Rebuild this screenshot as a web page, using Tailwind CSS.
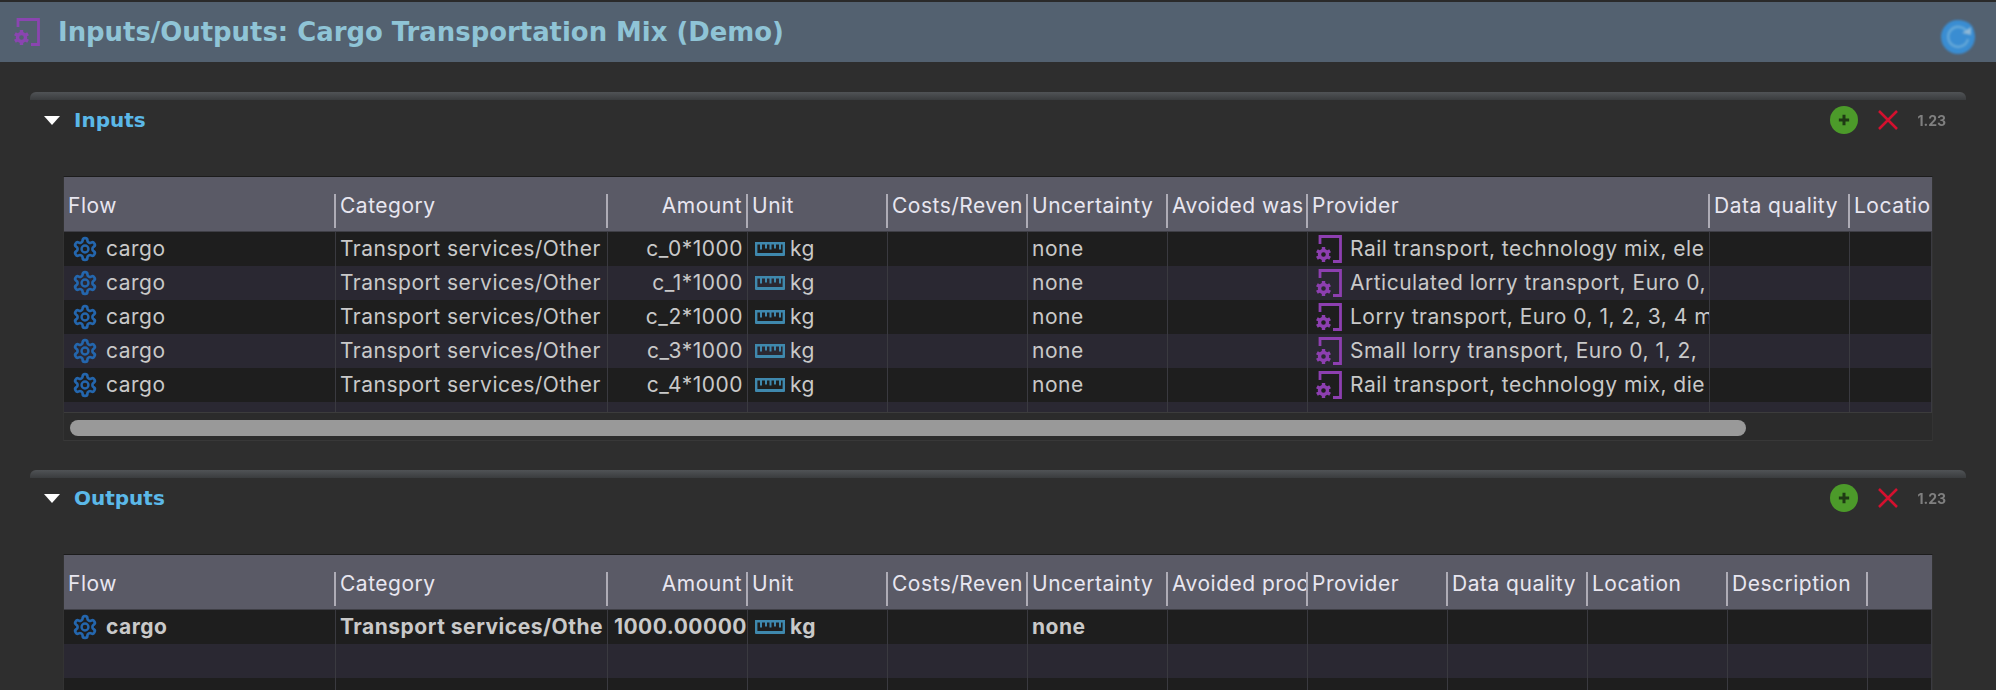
<!DOCTYPE html>
<html lang="en">
<head>
    <meta charset="UTF-8">
    <title>Inputs/Outputs: Cargo Transportation Mix (Demo)</title>
    <script src="https://cdn.jsdelivr.net/npm/@tailwindcss/browser@4"></script>
</head>
<body class="bg-[#2e2e2e] h-[690px] overflow-hidden font-['Inter',sans-serif]">
    <!-- shared icons -->
    <svg class="hidden">
        <symbol id="gear" viewBox="0 0 24 24">
            <path fill="none" stroke="currentColor" stroke-width="2.500" d="M12.22 2h-.44a2 2 0 0 0-2 2v.18a2 2 0 0 1-1 1.73l-.43.25a2 2 0 0 1-2 0l-.15-.08a2 2 0 0 0-2.73.73l-.22.38a2 2 0 0 0 .73 2.73l.15.1a2 2 0 0 1 1 1.72v.51a2 2 0 0 1-1 1.74l-.15.09a2 2 0 0 0-.73 2.73l.22.38a2 2 0 0 0 2.73.73l.15-.08a2 2 0 0 1 2 0l.43.25a2 2 0 0 1 1 1.73V20a2 2 0 0 0 2 2h.44a2 2 0 0 0 2-2v-.18a2 2 0 0 1 1-1.73l.43-.25a2 2 0 0 1 2 0l.15.08a2 2 0 0 0 2.73-.73l.22-.39a2 2 0 0 0-.73-2.73l-.15-.08a2 2 0 0 1-1-1.74v-.5a2 2 0 0 1 1-1.74l.15-.09a2 2 0 0 0 .73-2.73l-.22-.38a2 2 0 0 0-2.73-.73l-.15.08a2 2 0 0 1-2 0l-.43-.25a2 2 0 0 1-1-1.73V4a2 2 0 0 0-2-2z"/>
            <circle cx="12" cy="12" r="3.200" fill="none" stroke="currentColor" stroke-width="2.200"/>
        </symbol>
        <symbol id="process" viewBox="0 0 26 28">
            <path fill="none" stroke="currentColor" stroke-width="2.800" d="M4 9V1.500H24.500V26.500H17"/>
            <circle cx="7.500" cy="19.500" r="4" fill="none" stroke="currentColor" stroke-width="3.400"/>
            <path fill="none" stroke="currentColor" stroke-width="3.400" d="M7.500 12V15M7.500 24V27M.9 15.700L3.600 17.300M11.400 21.700L14.100 23.300M.9 23.300L3.600 21.700M11.400 17.300L14.100 15.700"/>
        </symbol>
        <symbol id="ruler" viewBox="0 0 30 14">
            <path fill="none" stroke="currentColor" stroke-width="2.400" d="M1.200 1.200H28.800V12.500H1.200z"/>
            <path fill="none" stroke="currentColor" stroke-width="2" d="M6 1V7.500M11 1V6.500M15.500 1V7.500M20 1V6.500M25 1V7.500"/>
            <path stroke="currentColor" stroke-width="3" d="M1 12.500H29"/>
        </symbol>
    </svg>

    <div class="h-[62px] box-border bg-[#536170] flex items-center pl-[14px] pr-[18px] border-t-[2px] border-[#2a2a2a]">
        <svg class="w-[26px] h-[28px] text-[#8a45b0]"><use href="#process"/></svg>
        <h1 class="ml-[18px] font-['DejaVu_Sans',sans-serif] font-bold text-[25.900px] text-[#8fc4d6]">Inputs/Outputs: Cargo Transportation Mix (Demo)</h1>
        <svg class="ml-auto mt-[10px] w-[38px] h-[38px] blur-[1px]" viewBox="0 0 38 38">
            <circle cx="18" cy="19" r="17" fill="#3a8dd2"/>
            <circle cx="22" cy="15" r="12" fill="#3a8dd2"/>
            <path fill="none" stroke="#65a8d8" stroke-width="2.500" d="M27 14a10 10 0 1 0 1 7"/>
            <path fill="#8fb8d6" d="M22 15l9-6v8z"/>
        </svg>
    </div>

    <section class="ml-[30px] w-[1936px] mt-[30px]">
        <div class="h-[8px] rounded-t-[6px] bg-gradient-to-b from-[#505356] to-[#3a3c3e]"></div>
        <div class="h-[40px] flex items-center pl-[14px] pr-[20px]">
            <span class="w-0 h-0 border-x-[8px] border-x-transparent border-t-[9px] border-t-white"></span>
            <h2 class="ml-[14px] font-['DejaVu_Sans',sans-serif] font-bold text-[20px] text-[#5bb8e8]">Inputs</h2>
            <span class="ml-auto flex items-center justify-center w-[28px] h-[28px] rounded-full bg-[#4c9a2a]">
                <svg class="w-[12px] h-[12px]" viewBox="0 0 14 14"><path stroke="#1f3a14" stroke-width="3.500" d="M7 1V13M1 7H13"/></svg>
            </span>
            <svg class="ml-[20px] w-[20px] h-[20px]" viewBox="0 0 20 20"><path stroke="#d4112f" stroke-width="2.500" d="M1 1L19 19M19 1L1 19"/></svg>
            <span class="ml-[19px] font-bold text-[14px] text-[#808080] blur-[0.4px]">1.23</span>
        </div>
        <div class="mx-[33px] mt-[36px] border border-[#333] border-t-[#1c1c1c] border-b-[#383838] text-[21px] tracking-[0.5px]">
            <div class="bg-[#5a5a66] h-[54px] pt-[17px] grid grid-cols-[272px_272px_140px_140px_140px_140px_140px_402px_140px_82px] text-[#e8e6f0] whitespace-nowrap [&>div]:h-[34px] [&>div]:overflow-hidden [&>div]:px-[4px] [&>div]:leading-[24px] [&>div:not(:last-child)]:border-r-2 [&>div:not(:last-child)]:border-[#aeacb6]">
                <div>Flow</div><div>Category</div><div class="text-right">Amount</div><div>Unit</div><div>Costs/Reven</div><div>Uncertainty</div><div>Avoided was</div><div>Provider</div><div>Data quality</div><div>Locatio</div>
            </div>
            <div class="border-t border-[#3f3f46] h-[181px] overflow-hidden text-[#c9c9c9] whitespace-nowrap">
                <div class="h-[34px] bg-[#1e1e1e] grid grid-cols-[272px_272px_140px_140px_140px_140px_140px_402px_140px_82px] items-stretch leading-[34px] [&>div]:overflow-hidden [&>div]:px-[4px] [&>div]:border-r [&>div]:border-[#3a3a40]">
                    <div class="flex items-center"><svg class="ml-[4px] mr-[8px] w-[26px] h-[26px] text-[#2466ad]"><use href="#gear"/></svg>cargo</div><div>Transport services/Other</div><div class="text-right">c_0*1000</div><div class="flex items-center"><svg class="ml-[3px] mr-[5px] w-[30px] h-[14px] text-[#3f88ad]"><use href="#ruler"/></svg>kg</div><div></div><div>none</div><div></div><div class="flex items-center"><svg class="ml-[4px] mr-[8px] w-[26px] h-[28px] shrink-0 text-[#8d3fb0]"><use href="#process"/></svg>Rail transport, technology mix, ele</div><div></div><div></div>
                </div>
                <div class="h-[34px] bg-[#2a2832] grid grid-cols-[272px_272px_140px_140px_140px_140px_140px_402px_140px_82px] items-stretch leading-[34px] [&>div]:overflow-hidden [&>div]:px-[4px] [&>div]:border-r [&>div]:border-[#3a3a40]">
                    <div class="flex items-center"><svg class="ml-[4px] mr-[8px] w-[26px] h-[26px] text-[#2466ad]"><use href="#gear"/></svg>cargo</div><div>Transport services/Other</div><div class="text-right">c_1*1000</div><div class="flex items-center"><svg class="ml-[3px] mr-[5px] w-[30px] h-[14px] text-[#3f88ad]"><use href="#ruler"/></svg>kg</div><div></div><div>none</div><div></div><div class="flex items-center"><svg class="ml-[4px] mr-[8px] w-[26px] h-[28px] shrink-0 text-[#8d3fb0]"><use href="#process"/></svg>Articulated lorry transport, Euro 0,</div><div></div><div></div>
                </div>
                <div class="h-[34px] bg-[#1e1e1e] grid grid-cols-[272px_272px_140px_140px_140px_140px_140px_402px_140px_82px] items-stretch leading-[34px] [&>div]:overflow-hidden [&>div]:px-[4px] [&>div]:border-r [&>div]:border-[#3a3a40]">
                    <div class="flex items-center"><svg class="ml-[4px] mr-[8px] w-[26px] h-[26px] text-[#2466ad]"><use href="#gear"/></svg>cargo</div><div>Transport services/Other</div><div class="text-right">c_2*1000</div><div class="flex items-center"><svg class="ml-[3px] mr-[5px] w-[30px] h-[14px] text-[#3f88ad]"><use href="#ruler"/></svg>kg</div><div></div><div>none</div><div></div><div class="flex items-center"><svg class="ml-[4px] mr-[8px] w-[26px] h-[28px] shrink-0 text-[#8d3fb0]"><use href="#process"/></svg>Lorry transport, Euro 0, 1, 2, 3, 4 m</div><div></div><div></div>
                </div>
                <div class="h-[34px] bg-[#2a2832] grid grid-cols-[272px_272px_140px_140px_140px_140px_140px_402px_140px_82px] items-stretch leading-[34px] [&>div]:overflow-hidden [&>div]:px-[4px] [&>div]:border-r [&>div]:border-[#3a3a40]">
                    <div class="flex items-center"><svg class="ml-[4px] mr-[8px] w-[26px] h-[26px] text-[#2466ad]"><use href="#gear"/></svg>cargo</div><div>Transport services/Other</div><div class="text-right">c_3*1000</div><div class="flex items-center"><svg class="ml-[3px] mr-[5px] w-[30px] h-[14px] text-[#3f88ad]"><use href="#ruler"/></svg>kg</div><div></div><div>none</div><div></div><div class="flex items-center"><svg class="ml-[4px] mr-[8px] w-[26px] h-[28px] shrink-0 text-[#8d3fb0]"><use href="#process"/></svg>Small lorry transport, Euro 0, 1, 2,</div><div></div><div></div>
                </div>
                <div class="h-[34px] bg-[#1e1e1e] grid grid-cols-[272px_272px_140px_140px_140px_140px_140px_402px_140px_82px] items-stretch leading-[34px] [&>div]:overflow-hidden [&>div]:px-[4px] [&>div]:border-r [&>div]:border-[#3a3a40]">
                    <div class="flex items-center"><svg class="ml-[4px] mr-[8px] w-[26px] h-[26px] text-[#2466ad]"><use href="#gear"/></svg>cargo</div><div>Transport services/Other</div><div class="text-right">c_4*1000</div><div class="flex items-center"><svg class="ml-[3px] mr-[5px] w-[30px] h-[14px] text-[#3f88ad]"><use href="#ruler"/></svg>kg</div><div></div><div>none</div><div></div><div class="flex items-center"><svg class="ml-[4px] mr-[8px] w-[26px] h-[28px] shrink-0 text-[#8d3fb0]"><use href="#process"/></svg>Rail transport, technology mix, die</div><div></div><div></div>
                </div>
                <div class="h-[34px] bg-[#2a2832] grid grid-cols-[272px_272px_140px_140px_140px_140px_140px_402px_140px_82px] [&>div]:border-r [&>div]:border-[#3a3a40]">
                    <div></div><div></div><div></div><div></div><div></div><div></div><div></div><div></div><div></div><div></div>
                </div>
            </div>
            <div class="h-[28px] border-t border-[#3c3c3c] bg-[#2b2b2b] pt-[7px] pl-[6px]">
                <div class="w-[1676px] h-[16px] rounded-full bg-[#999]"></div>
            </div>
        </div>
    </section>

    <section class="ml-[30px] w-[1936px] mt-[29px]">
        <div class="h-[8px] rounded-t-[6px] bg-gradient-to-b from-[#505356] to-[#3a3c3e]"></div>
        <div class="h-[40px] flex items-center pl-[14px] pr-[20px]">
            <span class="w-0 h-0 border-x-[8px] border-x-transparent border-t-[9px] border-t-white"></span>
            <h2 class="ml-[14px] font-['DejaVu_Sans',sans-serif] font-bold text-[20px] text-[#5bb8e8]">Outputs</h2>
            <span class="ml-auto flex items-center justify-center w-[28px] h-[28px] rounded-full bg-[#4c9a2a]">
                <svg class="w-[12px] h-[12px]" viewBox="0 0 14 14"><path stroke="#1f3a14" stroke-width="3.500" d="M7 1V13M1 7H13"/></svg>
            </span>
            <svg class="ml-[20px] w-[20px] h-[20px]" viewBox="0 0 20 20"><path stroke="#d4112f" stroke-width="2.500" d="M1 1L19 19M19 1L1 19"/></svg>
            <span class="ml-[19px] font-bold text-[14px] text-[#808080] blur-[0.4px]">1.23</span>
        </div>
        <div class="mx-[33px] mt-[36px] border border-[#333] border-t-[#1c1c1c] text-[21px] tracking-[0.5px]">
            <div class="bg-[#5a5a66] h-[54px] pt-[17px] grid grid-cols-[272px_272px_140px_140px_140px_140px_140px_140px_140px_140px_140px_64px] text-[#e8e6f0] whitespace-nowrap [&>div]:h-[34px] [&>div]:overflow-hidden [&>div]:px-[4px] [&>div]:leading-[24px] [&>div:not(:last-child)]:border-r-2 [&>div:not(:last-child)]:border-[#aeacb6]">
                <div>Flow</div><div>Category</div><div class="text-right">Amount</div><div>Unit</div><div>Costs/Reven</div><div>Uncertainty</div><div>Avoided proc</div><div>Provider</div><div>Data quality</div><div>Location</div><div>Description</div><div></div>
            </div>
            <div class="border-t border-[#3f3f46] text-[#c9c9c9] font-bold whitespace-nowrap">
                <div class="h-[34px] bg-[#1e1e1e] grid grid-cols-[272px_272px_140px_140px_140px_140px_140px_140px_140px_140px_140px_64px] leading-[34px] [&>div]:overflow-hidden [&>div]:px-[4px] [&>div]:border-r [&>div]:border-[#3a3a40]">
                    <div class="flex items-center"><svg class="ml-[4px] mr-[8px] w-[26px] h-[26px] text-[#2466ad]"><use href="#gear"/></svg>cargo</div><div>Transport services/Othe</div><div class="text-right !px-0">1000.00000</div><div class="flex items-center"><svg class="ml-[3px] mr-[5px] w-[30px] h-[14px] text-[#3f88ad]"><use href="#ruler"/></svg>kg</div><div></div><div>none</div><div></div><div></div><div></div><div></div><div></div><div></div>
                </div>
                <div class="h-[34px] bg-[#2a2832] grid grid-cols-[272px_272px_140px_140px_140px_140px_140px_140px_140px_140px_140px_64px] [&>div]:border-r [&>div]:border-[#3a3a40]">
                    <div></div><div></div><div></div><div></div><div></div><div></div><div></div><div></div><div></div><div></div><div></div><div></div>
                </div>
                <div class="h-[34px] bg-[#1e1e1e] grid grid-cols-[272px_272px_140px_140px_140px_140px_140px_140px_140px_140px_140px_64px] [&>div]:border-r [&>div]:border-[#3a3a40]">
                    <div></div><div></div><div></div><div></div><div></div><div></div><div></div><div></div><div></div><div></div><div></div><div></div>
                </div>
            </div>
        </div>
    </section>
</body>
</html>
